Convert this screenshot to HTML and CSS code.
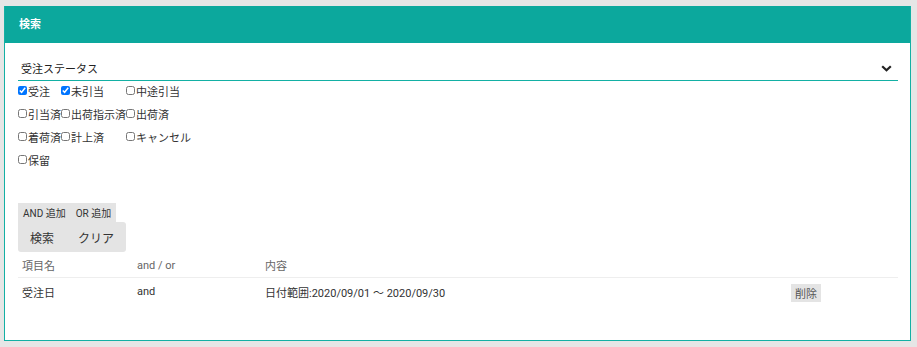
FILE: index.html
```html
<!DOCTYPE html>
<html lang="ja">
<head>
    <meta charset="UTF-8">
    <meta name="viewport" content="width=device-width, initial-scale=1.0">
    <title>検索</title>
    <link rel="stylesheet" href="styles.css">
</head>
<body>
    <div class="panel">
        <div class="panel-head">検索</div>
        <div class="panel-body">
            <!-- ステータス選択 -->
            <div class="status-select">
                <span>受注ステータス</span>
                <svg class="chevron" width="11" height="7" viewBox="0 0 11 7">
                    <path d="M1.2 1.2 L5.5 5.3 L9.8 1.2" fill="none" stroke="#222" stroke-width="2.2"/>
                </svg>
            </div>
            <div class="checks">
                <label><input type="checkbox" checked>受注</label>
                <label><input type="checkbox" checked>未引当</label>
                <label><input type="checkbox">中途引当</label>
                <label><input type="checkbox">引当済</label>
                <label><input type="checkbox">出荷指示済</label>
                <label><input type="checkbox">出荷済</label>
                <label><input type="checkbox">着荷済</label>
                <label><input type="checkbox">計上済</label>
                <label><input type="checkbox">キャンセル</label>
                <label><input type="checkbox">保留</label>
            </div>

            <div class="btn-group small">
                <button>AND 追加</button>
                <button>OR 追加</button>
            </div>
            <div class="btn-group large">
                <button>検索</button>
                <button>クリア</button>
            </div>

            <!-- 条件一覧 -->
            <table class="conditions">
                <thead>
                    <tr>
                        <th class="col-name">項目名</th>
                        <th class="col-op">and / or</th>
                        <th>内容</th>
                        <th class="col-act"></th>
                    </tr>
                </thead>
                <tbody>
                    <tr>
                        <td>受注日</td>
                        <td>and</td>
                        <td>日付範囲:2020/09/01 ～ 2020/09/30</td>
                        <td><button class="btn-del">削除</button></td>
                    </tr>
                </tbody>
            </table>
        </div>
    </div>
</body>
</html>
```

FILE: styles.css
```css
body {
    margin: 0;
    padding: 6px 6px 6px 4px;
    background-color: #e6e6e6;
    font-family: "Roboto", "Noto Sans CJK JP", sans-serif;
    color: #333;
}

.panel {
    height: 335px;
    box-sizing: border-box;
    background-color: #fff;
    border: 1px solid #13b0a4;
    border-top: none;
}

.panel-head {
    height: 37px;
    line-height: 37px;
    padding-left: 14px;
    background-color: #0ca89d;
    color: #fff;
    font-size: 11px;
    font-weight: bold;
}

.panel-body {
    padding: 0 12px 0 13px;
}

.status-select {
    display: flex;
    align-items: center;
    justify-content: space-between;
    height: 31px;
    box-sizing: border-box;
    margin-top: 7px;
    padding: 6px 6px 0 3px;
    border-bottom: 1px solid #13b0a4;
    font-size: 11px;
    color: #222;
}

.checks {
    display: grid;
    grid-template-columns: repeat(3, max-content);
    grid-auto-rows: 19px;
    row-gap: 4px;
    font-size: 11px;
}

.checks label {
    display: flex;
    align-items: center;
}

.checks input {
    width: 9px;
    height: 9px;
    margin: 0 1px 0 0;
}

.btn-group {
    display: flex;
    width: max-content;
    background-color: #e4e4e4;
}

.btn-group button {
    border: none;
    background: none;
    padding: 0;
    font-family: inherit;
    color: #333;
}

.btn-group.small {
    margin-top: 34px;
}

.btn-group.small button {
    height: 19px;
    padding: 0 5px;
    font-size: 10px;
}

.btn-group.large {
    border-radius: 0 3px 3px 3px;
}

.btn-group.large button {
    height: 30px;
    padding: 0 12px;
    font-size: 12px;
}

.conditions {
    width: 100%;
    margin-top: 1px;
    border-collapse: collapse;
    font-size: 11px;
}

.conditions th {
    height: 24px;
    padding: 0 4px;
    text-align: left;
    font-weight: normal;
    color: #666;
    border-bottom: 1px solid #eee;
}

.conditions td {
    height: 27px;
    padding: 0 4px;
    color: #333;
}

.col-name {
    width: 107px;
}

.col-op {
    width: 120px;
}

.col-act {
    width: 103px;
}

.btn-del {
    height: 18px;
    padding: 0 4px;
    border: none;
    background-color: #e4e4e4;
    font-family: inherit;
    font-size: 11px;
    color: #555;
    margin-top: 3px;
}
```
